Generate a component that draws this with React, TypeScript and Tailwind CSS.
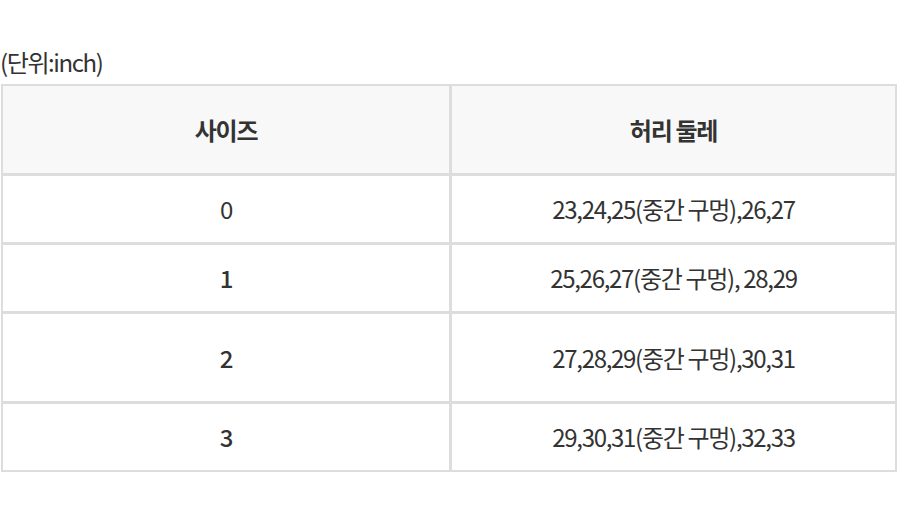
import React from "react";

const font = { fontFamily: '"Noto Sans CJK KR", "Noto Sans", sans-serif' };

const rows: { size: string; waist: string; h: string; bold: boolean }[] = [
  { size: "0", waist: "23,24,25(중간 구멍),26,27", h: "h-[69px]", bold: false },
  { size: "1", waist: "25,26,27(중간 구멍), 28,29", h: "h-[69px]", bold: true },
  { size: "2", waist: "27,28,29(중간 구멍),30,31", h: "h-[90px]", bold: true },
  { size: "3", waist: "29,30,31(중간 구멍),32,33", h: "h-[69px]", bold: true },
];

export default function App() {
  return (
    <div className="w-[900px] h-[528px] bg-white text-[#333]" style={font}>
      <div className="pt-[44px] h-[84px] text-[24px] leading-[35px] tracking-[-1.4px] text-[#333]">
        (단위:inch)
      </div>
      <div className="ml-[1px] w-[896px] border-2 border-[#dddddd] text-[24px] tracking-[-1.3px]">
        <div className="flex h-[87px] bg-[#f8f8f8] font-bold text-[#333]">
          <div className="w-[449px] border-r-[3px] border-[#dddddd] flex items-center justify-center">
            사이즈
          </div>
          <div className="flex-1 flex items-center justify-center">허리 둘레</div>
        </div>
        {rows.map((r) => (
          <div key={r.size} className={`flex ${r.h} border-t-[3px] border-[#dddddd] bg-white`}>
            <div
              className={`w-[449px] border-r-[3px] border-[#dddddd] flex items-center justify-center ${
                r.bold ? "font-medium" : "font-normal"
              }`}
            >
              {r.size}
            </div>
            <div className="flex-1 flex items-center justify-center">{r.waist}</div>
          </div>
        ))}
      </div>
    </div>
  );
}
